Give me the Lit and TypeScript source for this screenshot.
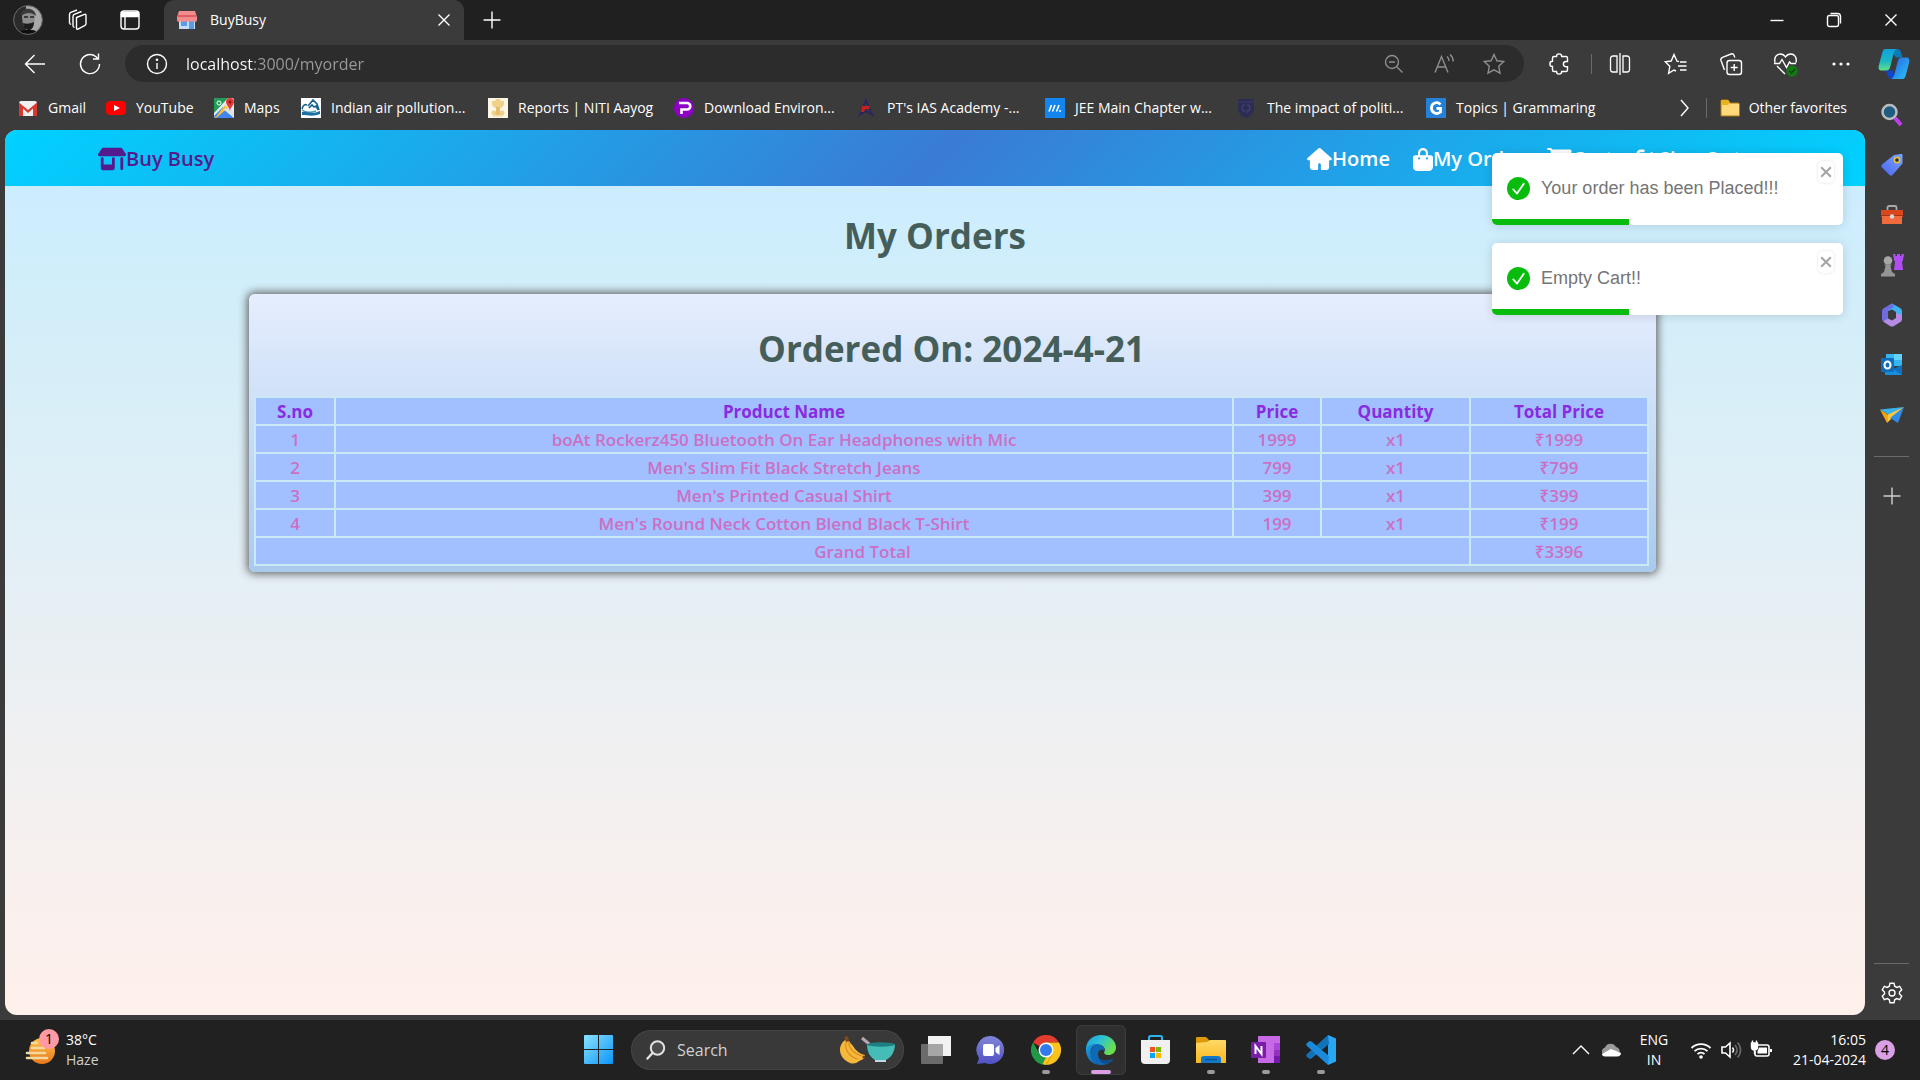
import { LitElement, html, css, svg, type TemplateResult } from "lit";
import { customElement, state } from "lit/decorators.js";
import { styleMap } from "lit/directives/style-map.js";

const icon = (size: number, box: string, body: unknown, cls = "line") =>
  html`<svg class=${cls} width=${size} height=${size} viewBox=${box} aria-hidden="true">${body}</svg>`;

/* ---------- window and toolbar glyphs ---------- */
const workspaces = icon(24, "0 0 24 24", svg`
  <path d="M10.500 9.500l8-3.200c.9-.3 1.500.2 1.500 1.100v8.200c0 .8-.3 1.400-1 1.700l-7 3.800c-.9.4-1.500 0-1.500-1z"/>
  <path d="M7 18.500V8.500c0-1 .4-1.700 1.300-2.100L15.500 3.500"/><path d="M3.500 15.500V6.500c0-1 .5-1.700 1.300-2.100L11 2"/>
  <path d="M3.500 15.500l1.500 1M7 18.500l1.500 1"/>`);
const tabActions = icon(22, "0 0 22 22", svg`
  <rect x="2" y="2" width="18" height="18" rx="3"/><path d="M2.500 3.500h17v4h-17z" fill="currentColor"/><path d="M6 8v11.500"/>`);
const cross = icon(16, "0 0 16 16", svg`<path d="M2.500 2.500l11 11M13.500 2.500l-11 11"/>`);
const plus = icon(20, "0 0 20 20", svg`<path d="M10 1.500v17M1.500 10h17"/>`);
const minimize = icon(16, "0 0 16 16", svg`<path d="M1.500 8.500h13"/>`);
const restore = icon(16, "0 0 16 16", svg`<rect x="1.500" y="3.500" width="11" height="11" rx="2"/><path d="M4.500 1.500h7a3 3 0 0 1 3 3v7"/>`);
const back = icon(24, "0 0 24 24", svg`<path d="M22 12H2.500M11.500 3L2.500 12l9 9"/>`);
const refresh = icon(24, "0 0 24 24", svg`<path d="M21.500 12A9.500 9.500 0 1 1 18 4.700l2.500 2.300M20.500 1.500V7H15"/>`);
const info = icon(22, "0 0 22 22", svg`<circle cx="11" cy="11" r="9.500"/><path d="M11 10v6"/><circle cx="11" cy="6.800" r=".6" fill="currentColor"/>`);
const zoomOut = icon(22, "0 0 22 22", svg`<circle cx="9" cy="9" r="6.500"/><path d="M6 9h6M14 14l5.500 5.500"/>`);
const readAloud = icon(24, "0 0 24 24", svg`<path d="M3 20.500L9.500 4.500 16 20.500M5.200 15h8.600M15 4.500c1.300 1 2 2.500 2 4.500M18 2.500c2 1.700 3.200 4 3.200 7"/>`);
const star = icon(24, "0 0 24 24", svg`<path d="M12 2.500l2.900 6.300 6.800.8-5 4.700 1.300 6.900-6-3.400-6 3.400 1.300-6.900-5-4.700 6.800-.8z"/>`);
const puzzle = icon(24, "0 0 24 24", svg`<path d="M8.500 4.500a2.600 2.600 0 0 1 5.200 0H18a1.500 1.500 0 0 1 1.500 1.500v3.500H18a2.600 2.600 0 0 0 0 5.200h1.500V18a1.500 1.500 0 0 1-1.500 1.500h-4.300a2.600 2.600 0 0 1-5.200 0H6A1.500 1.500 0 0 1 4.500 18v-3.500a2.600 2.600 0 0 1 0-5.200V6A1.500 1.500 0 0 1 6 4.500z"/>`);
const split = icon(24, "0 0 24 24", svg`<path d="M12 1v22M9 4H5a2.500 2.500 0 0 0-2.500 2.500v11A2.500 2.500 0 0 0 5 20h4zM15 4h4a2.500 2.500 0 0 1 2.500 2.500v11A2.500 2.500 0 0 1 19 20h-4z" stroke-width="1.300"/>`);
const favList = icon(24, "0 0 24 24", svg`<path d="M15 9.500l-2-.3L10 2.500 7.200 9l-6 .8 4.600 4.500-1.200 7L10 18l2 1M16 10h6.500M14 14h8.500M16 18h6.500"/>`);
const collections = icon(24, "0 0 24 24", svg`<rect x="8" y="8.500" width="14.500" height="14" rx="2.500"/><path d="M15.200 12v7M11.700 15.500h7M5.500 18L2 8.500C1.500 7 2 6 3.500 5.300L12 2c1.500-.5 2.500 0 3 1.200l.8 2.300"/>`);
const essentials = icon(26, "0 0 26 26", svg`
  <path d="M2 11.500C.8 6 4 3 7.200 3c2.300 0 4.200 1.200 5.300 3 1.100-1.800 3-3 5.300-3C21 3 24.200 6 23 11.500M4 15l8 8M1 12.500h5.500L9 8.500l4.500 8 3-5.500 1.500 1.500h5"/>
  <circle cx="19" cy="20" r="5.500" fill="#107c10" stroke="none"/><path d="M16.500 20l2 2 3.500-4" stroke="#0b3d0b"/>`);
const dots = icon(22, "0 0 22 22", svg`<circle cx="4" cy="11" r="1.600"/><circle cx="11" cy="11" r="1.600"/><circle cx="18" cy="11" r="1.600"/>`, "solid");
const chevron = icon(20, "0 0 20 20", svg`<path d="M6 2l7 8-7 8"/>`);
const gear = icon(24, "0 0 24 24", svg`<path d="M10 2.200h4l.7 3 2 1.200 3-1 2 3.500-2.200 2.100v2l2.200 2.100-2 3.500-3-1-2 1.200-.7 3h-4l-.7-3-2-1.200-3 1-2-3.500 2.200-2.100v-2L2.300 8.900l2-3.500 3 1 2-1.200z"/><circle cx="12" cy="12" r="3"/>`);

const copilot = icon(32, "0 0 34 34", svg`
  <defs>
    <linearGradient id="cpA" x1="0" y1="0" x2="0" y2="1"><stop offset="0" stop-color="#12a0dc"/><stop offset=".55" stop-color="#1ab6c4"/><stop offset="1" stop-color="#5fe08a"/></linearGradient>
    <linearGradient id="cpB" x1="0" y1="0" x2="1" y2="1"><stop offset="0" stop-color="#2a63e0"/><stop offset="1" stop-color="#28c3f7"/></linearGradient>
  </defs>
  <path d="M12 1h8c3 0 4 2 5 5l1 4h-7z" fill="#0a7bb5"/>
  <path d="M8 24h8l4 9h-5c-3 0-4-2-5-5z" fill="#1046c8"/>
  <path d="M8 1h12c-2 1-3 3-3.500 5L13 20c-.7 3-2 4-4.500 4H4c-3 0-4-2-3-6L4.500 5C5.200 2.500 6 1 8 1z" fill="url(#cpA)"/>
  <path d="M26 33H14c2-1 3-3 3.500-5L21 14c.7-3 2-4 4.500-4H30c3 0 4 2 3 6l-3.500 13c-.7 2.500-1.500 4-3.500 4z" fill="url(#cpB)"/>`, "art");

/* ---------- bookmark favicons ---------- */
const favStore = icon(22, "0 0 22 22", svg`
  <path d="M3 9h16v11H3z" fill="#c4dcfa"/><rect x="5" y="12" width="6" height="5" fill="#5a9be8"/><rect x="13" y="12" width="5" height="8" fill="#5a9be8"/>
  <path d="M3 2h16l2 6v3a2 2 0 0 1-4 0 2 2 0 0 1-4 0 2 2 0 0 1-4 0 2 2 0 0 1-4 0 2 2 0 0 1-4 0V8z" fill="#f28b8b"/><path d="M2 6h18v2H2z" fill="#e05c62"/>`, "art");
const gmail = icon(20, "0 0 20 20", svg`<rect x="1" y="3" width="18" height="15" rx="2" fill="#f1f1f1"/><path d="M1 18V4.500L10 12l9-7.500V18h-4V10.500L10 15l-5-4.500V18z" fill="#d93a30"/>`, "art");
const youtube = icon(20, "0 0 20 20", svg`<rect y="3" width="20" height="14" rx="4" fill="#f00"/><path d="M8 7l6 3-6 3z" fill="#fff"/>`, "art");
const maps = icon(20, "0 0 20 20", svg`<rect width="20" height="20" rx="2" fill="#e8eaed"/><path d="M0 2a2 2 0 0 1 2-2h12L0 15z" fill="#1e9e57"/><path d="M0 18L9 9l11 11H2z" fill="#4285f4"/><path d="M11 7l3 3-12 10H1z" fill="#fbc02d"/><path d="M9 11l11 9V14l-5-4z" fill="#dfe1e5"/><path d="M16 0a4 4 0 0 1 4 4c0 3-3.500 5-4 9-.5-4-4-6-4-9a4 4 0 0 1 4-4z" fill="#e53935"/><circle cx="16" cy="4" r="1.500" fill="#8e1b17"/><circle cx="5" cy="5" r="2" fill="none" stroke="#fff"/>`, "art");
const airPollution = icon(20, "0 0 20 20", svg`<rect width="20" height="20" fill="#fff"/><path d="M1 11c1-4 3-5 5-4M7 8l5-6 4 4 2 6M8 10l3-3 2 2 2-1 2 4" fill="none" stroke="#15628f" stroke-width="1.600"/><path d="M1 12c4 3 8 3 14 1" fill="none" stroke="#4b9cc4" stroke-width="1.500"/><path d="M1 14c5-1 9 3 18-1v3c-7 3-12 1-18 1z" fill="#1c6f9e"/>`, "art");
const niti = icon(20, "0 0 20 20", svg`<rect width="20" height="20" fill="#fdf6e6"/><path d="M4 3h3l1-2h4l1 2h3v4l-3 3H7L4 7z" fill="#efd08c"/><path d="M8 9h4v4H8z" fill="#e6bd6a"/><circle cx="6" cy="15" r="2.500" fill="#efd08c"/><circle cx="10" cy="15" r="2.500" fill="#e6bd6a"/><circle cx="14" cy="15" r="2.500" fill="#efd08c"/><path d="M5 18h10" stroke="#efd08c"/>`, "art");
const purpleP = icon(20, "0 0 20 20", svg`<circle cx="10" cy="10" r="10" fill="#8f00c7"/><path d="M5 5h8a3 3 0 0 1 0 6.500H7.500V16" fill="none" stroke="#fff" stroke-width="2.600"/>`, "art");
const ias = icon(20, "0 0 20 20", svg`<path d="M9 0l8 19-8-5-8 5zM9 5l-4 9 4-2 4 2z" fill="#2b2560" fill-rule="evenodd"/><path d="M5 8h8l-1 3H8l-1 3H4z" fill="#c8201d"/>`, "art");
const marks = icon(20, "0 0 20 20", svg`<rect width="20" height="20" fill="#1385f0"/><path d="M4 13.500l2.500-6.500M7.500 13.500L10 7M11.500 13.500L14 7" stroke="#fff" stroke-width="1.600"/><circle cx="15" cy="13" r="1" fill="#fff"/>`, "art");
const shield = icon(20, "0 0 20 20", svg`<path d="M1 1h16v9c0 5-3 8-8 10-5-2-8-5-8-10z" fill="#2c2c55"/><path d="M1 4h16" stroke="#3a3a62"/><path d="M8 7a3 3 0 1 0 0 6M10 7a3 3 0 1 1 0 6v2" fill="none" stroke="#40406c" stroke-width="1.300"/>`, "art");
const letterG = icon(20, "0 0 20 20", svg`<rect width="20" height="20" fill="#2481d7"/><path d="M14.500 6.500C11 3 5.500 5 5.500 10s5.500 7 9 4v-3.500H10.500" fill="none" stroke="#fff" stroke-width="2.800"/>`, "art");
const folder = icon(20, "0 0 20 20", svg`<path d="M1 3a1 1 0 0 1 1-1h6l2 3h8a1.500 1.500 0 0 1 1.500 1.500V18H1z" fill="#ffd97a" stroke="#a97a10"/><path d="M1 7V3a1 1 0 0 1 1-1h6l2 3-2 2z" fill="#e9b320"/>`, "art");

/* ---------- sidebar apps ---------- */
const sideSearch = icon(24, "0 0 24 24", svg`<path d="M15 15l6 7" stroke="#bf3ff0" stroke-width="4"/><circle cx="9.500" cy="9" r="7" fill="#1f5c80" stroke="#b9bcc0" stroke-width="2.500"/>`, "art");
const sideTag = icon(24, "0 0 24 24", svg`<defs><linearGradient id="tg" x1="1" y1="0" x2="0" y2="1"><stop offset="0" stop-color="#7aa7ff"/><stop offset="1" stop-color="#4a63f0"/></linearGradient></defs><path d="M14 2l7-1c1 0 1.500.5 1.500 1.500v8L12.500 22c-1 1-2 1-3 0L2 14.500c-1-1-1-2 0-3z" fill="url(#tg)"/><circle cx="17" cy="7" r="2.600" fill="#1d2a70" stroke="#f6c51a" stroke-width="1.500"/>`, "art");
const sideTools = icon(24, "0 0 24 24", svg`<path d="M7.500 7V4.500A1.500 1.500 0 0 1 9 3h6a1.500 1.500 0 0 1 1.500 1.500V7" fill="none" stroke="#a9a9a9" stroke-width="1.800"/><path d="M1 7h22v7H1z" fill="#d8481c"/><path d="M2 13h20v8H2z" fill="#f06a3c"/><path d="M1 12.500h22" stroke="#a8330f"/><circle cx="12" cy="13.500" r="2.200" fill="#d9d9d9"/>`, "art");
const sideGames = icon(24, "0 0 24 24", svg`<path d="M13 1h2.500v2h1.500V1h3v2h1.500V1H24l-1 6-1 2 1 8h-9l1-8-1-2z" fill="#b14df5"/><circle cx="8" cy="7.500" r="4.300" fill="#a7a7a7"/><path d="M4 11.500h8l-1.500 1.500 1.500 6 3 2v2.500H1V21l3-2 1.500-6z" fill="#959595"/>`, "art");
const side365 = icon(24, "0 0 24 24", svg`<path d="M12 .5l8 4.500c1.500 1 2 2 2 3.500v7L16 12V9l-4-2.500L8 8V3z" fill="#3fb1f2"/><path d="M12 .5L4 5C2.500 6 2 7 2 8.500V16c0 1 .5 2 1.500 2.500L8 16V9c0-2 1-2.500 3-3.500l3-1.500z" fill="#6f6be0"/><path d="M22 12v4c0 1.500-.7 2.500-2 3.300l-6 3.700c-1.300.7-2.700.7-4 0L3 18.500l5-3 4 2 4-2.500V10z" fill="#b58be6"/>`, "art");
const sideOutlook = icon(24, "0 0 24 24", svg`<rect x="6" y="1" width="16" height="12" fill="#36b5f0"/><path d="M14 1h8v6h-8z" fill="#60d4ff"/><path d="M5 12l9 5 8-5v10H5z" fill="#1490df"/><path d="M22 12v10l-9-6z" fill="#0f6fc0"/><rect x="1" y="5" width="13" height="14" rx="1" fill="#0f6cbd"/><ellipse cx="7.500" cy="12" rx="3" ry="3.600" fill="none" stroke="#fff" stroke-width="2"/>`, "art");
const sideDrop = icon(24, "0 0 24 24", svg`<path d="M0 6.500L24 4 9 12z" fill="#35b3f2"/><path d="M0 6.500L7 20l1.500-8z" fill="#f2a50c"/><path d="M24 4L8 11.500 7 20l4-4z" fill="#ffc83a"/><path d="M24 4l-6 16-8-5z" fill="#2f8be6"/>`, "art");

/* ---------- shop glyphs ---------- */
const shop = html`<svg class="solid" width="28" height="24" viewBox="0 0 640 512" aria-hidden="true"><path d="M36.800 192h566.400a36.800 36.800 0 0 0 30.600-57.200L558.200 21.400C549.300 8 534.400 0 518.300 0H121.700c-16 0-31 8-39.900 21.400L6.200 134.700A36.800 36.800 0 0 0 36.800 192zM64 224v240c0 26.500 21.500 48 48 48h224c26.500 0 48-21.500 48-48V224h-64v160H128V224zm448 0v256c0 17.700 14.300 32 32 32s32-14.300 32-32V224z"/></svg>`;
const home = html`<svg class="solid" width="25" height="22" viewBox="0 0 576 512" aria-hidden="true"><path d="M575.800 255.500c0 18-15 32.100-32 32.100h-32l.7 160.200c.2 35.500-28.500 64.300-64 64.300H352c-17.700 0-32-14.300-32-32V384c0-17.700-14.300-32-32-32s-32 14.300-32 32v96c0 17.700-14.300 32-32 32h-96c-35.300 0-64-28.700-64-64V287.600H32c-18 0-32-14-32-32.100 0-9 3-17 10-24L266.400 8c7-7 15-8 22-8s15 2 21 7l255.400 224.500c8 7 12 15 11 24z"/></svg>`;
const bag = html`<svg class="solid" width="20" height="23" viewBox="0 0 448 512" aria-hidden="true"><path d="M160 112c0-35.300 28.700-64 64-64s64 28.700 64 64v48H160zm-48 48H48c-26.500 0-48 21.500-48 48v208c0 53 43 96 96 96h256c53 0 96-43 96-96V208c0-26.500-21.500-48-48-48h-64v-48a112 112 0 0 0-224 0zm24 48a24 24 0 1 1 0 48 24 24 0 1 1 0-48zm152 24a24 24 0 1 1 48 0 24 24 0 1 1-48 0z"/></svg>`;
const cart = html`<svg class="solid" width="25" height="22" viewBox="0 0 576 512" aria-hidden="true"><path d="M0 24C0 10.700 10.700 0 24 0h45.500c22 0 41.500 12.800 50.600 32h411c26.300 0 45.500 25 38.600 50.400l-41 152.300c-8.500 31.400-37 53.300-69.500 53.300H170.700l5.400 28.500c2.200 11.300 12.100 19.500 23.600 19.500H488a24 24 0 1 1 0 48H199.700c-34.600 0-64.300-24.600-70.700-58.500L77.400 54.500c-.7-3.800-4-6.500-7.900-6.500H24C10.700 48 0 37.300 0 24zm128 440a48 48 0 1 1 96 0 48 48 0 1 1-96 0zm336-48a48 48 0 1 1 0 96 48 48 0 1 1 0-96z"/></svg>`;
const exit = html`<svg class="solid" width="23" height="22" viewBox="0 0 512 512" aria-hidden="true"><path d="M502.600 278.600c12.500-12.500 12.500-32.800 0-45.300l-128-128a32 32 0 0 0-45.300 45.300L402.700 224H192a32 32 0 1 0 0 64h210.700l-73.400 73.400a32 32 0 0 0 45.300 45.300zM160 96a32 32 0 1 0 0-64H96C43 32 0 75 0 128v256c0 53 43 96 96 96h64a32 32 0 1 0 0-64H96c-17.700 0-32-14.300-32-32V128c0-17.700 14.300-32 32-32z"/></svg>`;
const check = icon(23, "0 0 24 24", svg`<circle cx="12" cy="12" r="12" fill="#07bc0c"/><path d="M6.500 13l4 4.300L17.500 7" fill="none" stroke="#fff" stroke-width="1.900" stroke-linecap="round" stroke-linejoin="round"/>`, "art");

/* ---------- taskbar ---------- */
const weather = icon(34, "0 0 34 34", svg`<defs><linearGradient id="sun" x1="0" y1="0" x2="0" y2="1"><stop offset="0" stop-color="#ffc24a"/><stop offset="1" stop-color="#e8771a"/></linearGradient></defs><circle cx="19" cy="18" r="13" fill="url(#sun)"/><path d="M9 10h5M9 15h12M4 20h18M4 25h20" stroke="#f3d9a0" stroke-width="2.600" stroke-linecap="round"/>`, "art");
const start = icon(30, "0 0 30 30", svg`<defs><linearGradient id="win" x1="0" y1="0" x2="1" y2="1"><stop offset="0" stop-color="#8ae2ff"/><stop offset="1" stop-color="#0a95f8"/></linearGradient></defs><path d="M1 0h13v14H0V1a1 1 0 0 1 1-1zM15 0h13a1 1 0 0 1 1 1v13H15zM0 15h14v14H1a1 1 0 0 1-1-1zM15 15h14v13a1 1 0 0 1-1 1H15z" fill="url(#win)"/>`, "art");
const lens = icon(20, "0 0 20 20", svg`<circle cx="11.500" cy="8" r="6.700" fill="#4c4c4c" stroke="#e2e2e2" stroke-width="2"/><path d="M6.500 13L1.500 18.500" stroke="#e2e2e2" stroke-width="2.400" stroke-linecap="round"/>`, "art");
const fruit = html`<svg class="art" width="58" height="28" viewBox="0 0 58 28" aria-hidden="true">
  <path d="M9 3c-9 4-10 17 1 23 5 3 9 1 11-1 4-1 6-3 6-6-5-1-9-4-12-9z" fill="#f5b83a"/><path d="M9 5c-4 7 2 16 11 18M11 5c-1 7 5 13 13 15" fill="none" stroke="#d98e1f" stroke-width="1.200"/><path d="M6 1l4-1 1 5-3 1z" fill="#7b4a1b"/><circle cx="26" cy="21" r="1.600" fill="#6e4317"/>
  <path d="M24 2l12 10" stroke="#b7a5b5" stroke-width="3"/><path d="M29 8h28c0 9-5 14-9 16v2H37v-2c-5-3-8-8-8-16z" fill="#45bdb6"/><ellipse cx="43" cy="8.500" rx="14" ry="2.200" fill="#1f7f84"/><path d="M37 25h11" stroke="#c1d6e6" stroke-width="2"/></svg>`;
const taskView = icon(30, "0 0 30 30", svg`<rect x="7" y="1" width="23" height="20" fill="#f2f2f2"/><rect x="0" y="9" width="22" height="20" rx="1" fill="#6b6b6b"/><path d="M7 9h15v12H7z" fill="#a6a6a6"/>`, "art");
const chat = icon(30, "0 0 30 30", svg`<defs><linearGradient id="ch" x1="0" y1="0" x2="0" y2="1"><stop offset="0" stop-color="#7f86d6"/><stop offset="1" stop-color="#5152c4"/></linearGradient></defs><path d="M15 1a14 14 0 1 1-6 27L1 29l2-6A14 14 0 0 1 15 1z" fill="url(#ch)"/><rect x="7" y="9" width="11" height="12" rx="2" fill="#fff"/><path d="M19.500 13l4-3v10l-4-3z" fill="#fff"/>`, "art");
const chrome = icon(30, "0 0 30 30", svg`<path d="M15 15L2 7.500A15 15 0 0 1 28 7.500H15z" fill="#e33b2e"/><path d="M15 15V7.500h13A15 15 0 0 1 15 30l6.500-11.200z" fill="#fcc31e"/><path d="M2 7.500L8.500 18.700l6.500 3.800L15 30A15 15 0 0 1 2 7.500z" fill="#219a48"/><path d="M15 30l6.500-11.200-6.500 3.700-3.500 6.500z" fill="#fcc31e"/><circle cx="15" cy="15" r="7.500" fill="#fff"/><circle cx="15" cy="15" r="6" fill="#3079ee"/>`, "art");
const edge = icon(30, "0 0 30 30", svg`<defs><linearGradient id="ed" x1="0" y1="0" x2="1" y2=".5"><stop offset="0" stop-color="#1b9de2"/><stop offset=".5" stop-color="#2fc3d2"/><stop offset="1" stop-color="#6be04a"/></linearGradient><linearGradient id="ee" x1="0" y1="0" x2="1" y2="1"><stop offset="0" stop-color="#1a9fe8"/><stop offset="1" stop-color="#0c59a4"/></linearGradient></defs>
  <path d="M0 13C1 5 7 0 15 0c9 0 15 6 15 12.500 0 5-4 7.500-7.500 7.500-4 0-5-2-4-3.500 1.500-3-1-6.500-6-6.500C6 10 1 13 0 17z" fill="url(#ed)"/>
  <path d="M0 15C1 11 5 8.500 10 9c-4 2-6 6-5 11 1 4.500 5 8 9 9.900C6 30 0 23 0 15z" fill="url(#ee)"/>
  <path d="M10 9c4-.5 8.500 2 8.500 6-3-1-7 0-6.500 5 1 6 9 7 15.500 3.500C25 28 20 30.500 14 29.900 8 28 4 23 5 17c.5-4 2-6.500 5-8z" fill="#1169b5"/>
  <path d="M27.500 23.500C22 27 13 26 12 20c0 6 4 9 9 8.700 3-1 5-3 6.500-5.200z" fill="#0d4d91"/>`, "art");
const store = icon(30, "0 0 30 30", svg`<path d="M8 7V2.500A1.500 1.500 0 0 1 9.500 1h10A1.500 1.500 0 0 1 21 2.500V7" fill="none" stroke="#2cb4f2" stroke-width="2"/><path d="M0 5h29v20a4 4 0 0 1-4 4H4a4 4 0 0 1-4-4z" fill="#f0f0f0"/><path d="M9 12h5v5H9z" fill="#f25022"/><path d="M15 12h5v5h-5z" fill="#7fba00"/><path d="M9 18h5v5H9z" fill="#00a4ef"/><path d="M15 18h5v5h-5z" fill="#ffb900"/>`, "art");
const explorer = icon(30, "0 0 30 30", svg`<defs><linearGradient id="ex" x1="0" y1="0" x2="0" y2="1"><stop offset="0" stop-color="#ffd968"/><stop offset="1" stop-color="#f9b81c"/></linearGradient></defs><path d="M0 3a1 1 0 0 1 1-1h9l3 3v4H0z" fill="#dc9a08"/><path d="M0 8l11-1 3-2h15a1 1 0 0 1 1 1v22H0z" fill="url(#ex)"/><path d="M5 28v-4a3 3 0 0 1 3-3h14a3 3 0 0 1 3 3v4z" fill="#1278c8"/><path d="M9 24.500h12" stroke="#0b5494" stroke-width="1.500"/>`, "art");
const onenote = icon(30, "0 0 30 30", svg`<path d="M7 1h22v27H7z" fill="#c86ae8"/><path d="M23 8h6v7h-6z" fill="#ae45da"/><path d="M23 15h6v6h-6z" fill="#9332bf"/><path d="M23 21h6v7h-6z" fill="#7719aa"/><rect x="0" y="7" width="15" height="16" rx="1" fill="#7a1ea8"/><path d="M4.500 19v-8l6 8v-8" fill="none" stroke="#fff" stroke-width="2"/>`, "art");
const vscode = icon(30, "0 0 30 30", svg`<path d="M22 0l8 3.500v23L22 30z" fill="#2aa7f3"/><path d="M22 0L1 19c-1 1-1 2 0 3l2 1.500c1 .5 1.500.5 2.500 0L23 9z" fill="#1272b8"/><path d="M22 30L1 11c-1-1-1-2 0-3l2-1.500c1-.5 1.500-.5 2.500 0L23 21z" fill="#1a8bdb"/>`, "art");
const cloud = html`<svg class="art" width="22" height="16" viewBox="0 0 22 16" aria-hidden="true"><path d="M5 14A4.500 4.500 0 0 1 5 5.500 6 6 0 0 1 16 5a4.800 4.800 0 0 1 1 9z" fill="#9b9b9b"/><path d="M2 12l9-5 10 4c0 2-1.500 3.500-4 3.500H5c-2 0-3-1-3-2.500z" fill="#fff"/></svg>`;
const up = icon(20, "0 0 20 20", svg`<path d="M2 14l8-8 8 8"/>`);
const wifi = icon(22, "0 0 22 22", svg`<g stroke-width="1.800"><path d="M1.500 9a13.500 13.500 0 0 1 19 0M4.500 12.200a9.300 9.300 0 0 1 13 0M7.500 15.200a5 5 0 0 1 7 0"/></g><circle cx="11" cy="18" r="1.800" fill="currentColor" stroke="none"/>`);
const speaker = icon(22, "0 0 22 22", svg`<path d="M2 8h3.500L10 4v14l-4.500-4H2z" stroke-width="1.600"/><path d="M12.500 8.500c1.300 1.500 1.300 3.500 0 5"/><path d="M15 6c2.500 3 2.500 7 0 10M17.500 3.500c4 4 4 11 0 15" stroke="#6a6a6a" stroke-width="1.600"/>`);
const battery = icon(22, "0 0 22 22", svg`<path d="M8 6h9a2 2 0 0 1 2 2v7a2 2 0 0 1-2 2H7a2 2 0 0 1-2-2v-3" stroke-width="1.600"/><path d="M9 8.500h8v6H7.500v-2z" fill="currentColor" stroke="none"/><path d="M1.500 4h6v4a3 3 0 0 1-6 0zM2.500 4V1.500M6.500 4V1.500M4.500 11v4" fill="currentColor"/><path d="M21 10v3" stroke-width="2"/>`);

interface Entry { label: string; art: TemplateResult; }
interface Item { name: string; price: number; qty: number; }

const bookmarks: Entry[] = [
  { label: "Gmail", art: gmail },
  { label: "YouTube", art: youtube },
  { label: "Maps", art: maps },
  { label: "Indian air pollution...", art: airPollution },
  { label: "Reports | NITI Aayog", art: niti },
  { label: "Download Environ...", art: purpleP },
  { label: "PT's IAS Academy -...", art: ias },
  { label: "JEE Main Chapter w...", art: marks },
  { label: "The impact of politi...", art: shield },
  { label: "Topics | Grammaring", art: letterG },
];
const sideApps: Entry[] = [
  { label: "Search", art: sideSearch },
  { label: "Shopping", art: sideTag },
  { label: "Tools", art: sideTools },
  { label: "Games", art: sideGames },
  { label: "Microsoft 365", art: side365 },
  { label: "Outlook", art: sideOutlook },
  { label: "Drop", art: sideDrop },
];
const pinned: (Entry & { mark: string })[] = [
  { label: "Task view", art: taskView, mark: "" },
  { label: "Chat", art: chat, mark: "" },
  { label: "Chrome", art: chrome, mark: "open" },
  { label: "Edge", art: edge, mark: "active" },
  { label: "Store", art: store, mark: "" },
  { label: "File Explorer", art: explorer, mark: "open" },
  { label: "OneNote", art: onenote, mark: "open" },
  { label: "Code", art: vscode, mark: "open" },
];
const items: Item[] = [
  { name: "boAt Rockerz450 Bluetooth On Ear Headphones with Mic", price: 1999, qty: 1 },
  { name: "Men's Slim Fit Black Stretch Jeans", price: 799, qty: 1 },
  { name: "Men's Printed Casual Shirt", price: 399, qty: 1 },
  { name: "Men's Round Neck Cotton Blend Black T-Shirt", price: 199, qty: 1 },
];

@customElement("app-root")
export class AppRoot extends LitElement {
  @state() private toasts = [
    { text: "Your order has been Placed!!!", left: 39 },
    { text: "Empty Cart!!", left: 39 },
  ];

  static styles = css`
    :host {
      display: flex; flex-direction: column; min-height: 100vh;
      background: #3b3b3b; color: #fff;
      font: 14px/20px "Open Sans", "Noto Sans", sans-serif;
    }
    * { box-sizing: border-box; }
    svg { display: block; flex: none; }
    .line { fill: none; stroke: currentColor; stroke-width: 1.4; }
    .solid { fill: currentColor; }
    button { display: flex; align-items: center; justify-content: center; padding: 0; border: 0; background: none; color: inherit; font: inherit; flex: none; }
    a { color: inherit; text-decoration: none; }
    .tool { width: 55px; height: 40px; }

    .titlebar { display: flex; height: 40px; background: #202020; }
    .profile { width: 52px; height: 40px; padding-left: 4px; }
    .start-tools { display: flex; width: 164px; }
    .start-tools .tool { width: 52px; }
    .tab { display: flex; align-items: center; width: 300px; height: 40px; padding: 0 12px; gap: 12px; background: #3b3b3b; border-radius: 10px 10px 0 0; flex: none; }
    .tab-name { flex: 1; }
    .tab button { width: 16px; }
    .window { display: flex; margin-left: auto; padding-right: 1px; }
    .window .tool { width: 57px; }

    .toolbar { display: flex; align-items: center; height: 46px; padding: 1px 0 0 7px; }
    .address { display: flex; align-items: center; flex: 1; height: 37px; margin-left: 8px; padding: 0 5px 0 21px; border-radius: 19px; background: #2c2c2c; }
    .address .tool { width: 50px; color: #8e8e8e; }
    .address .info { width: 22px; }
    .url { flex: 1; min-width: 0; margin-left: 18px; padding: 0; border: 0; outline: 0; font: 16px/24px "Open Sans", "Noto Sans", sans-serif;
      color: transparent; background: linear-gradient(90deg, #fff 67px, #9a9a9a 67px); background-clip: text; -webkit-background-clip: text; }
    .extras { display: flex; align-items: center; padding-left: 8px; }
    .extras .narrow { width: 56px; }
    .extras .copilot { width: 52px; }
    .extras .rule { margin-left: 4px; }
    .rule { width: 1px; height: 20px; background: #6a6a6a; }

    .bookmarks { display: flex; align-items: center; height: 44px; padding: 0 73px 0 18px; }
    .bookmarks ul { display: grid; grid-template-columns: 88px 108px 87px 187px 186px 183px 188px 192px 189px auto; margin: 0; padding: 0; list-style: none; }
    .bookmark { display: flex; align-items: center; gap: 10px; white-space: nowrap; }
    .more { width: 20px; margin-left: auto; margin-right: 11px; }
    .other { gap: 9px; margin-left: 13px; }

    .middle { display: flex; flex: 1; padding: 0 0 5px 5px; }
    .page { position: relative; flex: 1; min-width: 0; border-radius: 12px; overflow: hidden; color: #455e59;
      background: linear-gradient(#cbebff 0, #cdedff 8%, #d0eefa 16%, #e4eff5 50%, #f3f0f0 75%, #fff0eb 100%); }
    .nav { display: flex; align-items: center; height: 56px; padding: 2px 124px 0 93px; background: linear-gradient(135deg, #00d2ff, #3a7bd5, #00d2ff);
      color: #fff; font-size: 20px; line-height: 28px; font-weight: 600; }
    .nav a { display: flex; align-items: center; }
    .brand { color: #551a8b; }
    .links { display: flex; gap: 23px; margin-left: auto; }
    h1 { margin: 0; text-align: center; font-size: 35px; line-height: 48px; font-weight: 700; }
    .title { margin-top: 26px; }
    .card { width: calc(75% + 12px); margin: 34px 0 0 244px; padding: 31px 7px 6px 5px; border-radius: 6px; background: linear-gradient(#e6eefe, #a9caed); box-shadow: 0 0 8px 2px #666; }
    .orders { width: 100%; margin-top: 23px; border-collapse: collapse; table-layout: fixed; text-align: center; font-size: 17px; line-height: 24px; font-weight: 600; color: #cc6fc4; }
    .orders th, .orders td { padding: 2px 0 0; border: 2px solid #cbe8f5; background: #a2bfff; }
    .orders th { color: #8a2be2; font-weight: 700; }
    .c-no { width: 80px; } .c-price { width: 88px; } .c-qty { width: 149px; } .c-total { width: 178px; }

    .toasts { position: absolute; top: 23px; right: 22px; width: 351px; display: flex; flex-direction: column; gap: 18px; }
    .toast { position: relative; display: flex; align-items: center; height: 72px; padding: 0 15px 2px; gap: 11px; border-radius: 5px; overflow: hidden;
      background: #fff; color: #757575; font: 18px/24px "Liberation Sans", Arial, sans-serif; }
    .lift { border-radius: 5px; box-shadow: 0 1px 11px rgba(0, 0, 0, 0.14); }
    .toast button { position: absolute; top: 8px; right: 9px; width: 16px; height: 22px; border-radius: 5px; box-shadow: 0 0 3px #ddd; color: #a5a5a5; }
    .toast button svg { width: 14px; height: 14px; stroke-width: 2.4; }
    .progress { position: absolute; left: 0; bottom: 0; height: 6px; background: #07bc0c; }

    .side { display: flex; flex-direction: column; align-items: center; width: 55px; margin-top: -40px; padding-right: 2px; }
    .side .app { width: 40px; height: 50px; }
    .side .rule { width: 35px; height: 1px; }
    .side .first { margin-top: 16px; }
    .side .add { margin-top: 14px; color: #d0d0d0; }
    .side .last { margin-top: auto; }
    .side .app.settings { height: 51px; padding-top: 6px; }

    .taskbar { display: grid; grid-template-columns: 1fr auto 1fr; align-items: center; height: 60px; background: #212121; }
    .weather { display: flex; width: 140px; margin-left: 23px; justify-content: flex-start; text-align: left; line-height: 20px; gap: 9px; color: #d0d0d0; }
    .weather strong { display: block; font-weight: 400; color: #fff; }
    .weather-art { position: relative; }
    .badge { display: grid; place-items: center; width: 20px; height: 20px; border-radius: 50%; color: #000; background: #d9a0e6; }
    .alert { position: absolute; top: -4px; right: -2px; background: #ff99a4; }
    .dock { display: flex; align-items: center; gap: 5px; }
    .search { display: flex; align-items: center; width: 273px; height: 40px; margin: 0 2px; padding: 0 8px 0 15px; border-radius: 20px; background: #393939; box-shadow: inset 0 0 0 1px #454545; }
    .search input { flex: 1; min-width: 0; margin-left: 11px; padding: 0; border: 0; outline: 0; background: none; color: #fff; font: 16px/24px "Open Sans", "Noto Sans", sans-serif; }
    .search input::placeholder { color: #d0d0d0; opacity: 1; }
    .pin { position: relative; width: 50px; height: 50px; border-radius: 6px; }
    .pin.active { background: #2f2f2f; box-shadow: inset 0 0 0 1px #3c3c3c; }
    .pin.open::after, .pin.active::after { content: ""; position: absolute; bottom: 1px; left: 50%; width: 8px; height: 4px; margin-left: -4px; border-radius: 2px; background: #9a9a9a; }
    .pin.active::after { width: 20px; margin-left: -10px; background: #d9a0e6; }
    .tray { display: flex; align-items: center; justify-content: flex-end; padding-right: 25px; }
    .tray button { width: 30px; }
    .tray .lang { display: block; width: 56px; margin-right: 4px; line-height: 20px; }
    .tray .clock { display: block; width: 90px; text-align: right; line-height: 20px; margin-right: 9px; }
  `;

  private dismiss(index: number) {
    this.toasts = this.toasts.filter((_, i) => i !== index);
  }

  private tool(label: string, art: TemplateResult, cls = "") {
    return html`<button class="tool ${cls}" aria-label=${label}>${art}</button>`;
  }

  private bookmark(entry: Entry, cls = "") {
    return html`<a class="bookmark ${cls}" href="#">${entry.art}<span>${entry.label}</span></a>`;
  }

  private renderBrowser() {
    return html`
      <header>
        <div class="titlebar">
          <div class="start-tools">
            <button class="profile" aria-label="Profile">
              ${icon(30, "0 0 30 30", svg`<defs><clipPath id="av"><circle cx="15" cy="15" r="14"/></clipPath></defs><g clip-path="url(#av)"><path d="M0 0h30v30H0z" fill="#a9a9a9"/><path d="M0 0h13v30H0z" fill="#2b2b2b"/><path d="M9 12c0-8 12-9 13 0l-1 7c-2 5-8 6-11 1z" fill="#8d8d8d"/><path d="M8 11C7 2 22 1 23 11c-4-4-10-4-15 0z" fill="#3a3a3a"/><path d="M10 18c3 1 7 1 11-1 0 6-3 8-5 8s-6-2-6-7z" fill="#1c1c1c"/><path d="M11 12h4M17 12h4" stroke="#222" stroke-width="1.500"/><path d="M3 30c2-7 22-7 25 0z" fill="#0e0e0e"/></g><circle cx="15" cy="15" r="14.500" fill="none" stroke="#666"/>`, "art")}
            </button>
            ${this.tool("Workspaces", workspaces)}<button class="tool" aria-label="Tab actions">${tabActions}</button>
          </div>
          <div class="tab">${favStore}<span class="tab-name">BuyBusy</span><button aria-label="Close tab">${cross}</button></div>
          ${this.tool("New tab", plus)}
          <div class="window">${this.tool("Minimize", minimize)}${this.tool("Restore", restore)}${this.tool("Close", cross)}</div>
        </div>
        <div class="toolbar">
          ${this.tool("Back", back)}${this.tool("Refresh", refresh)}
          <div class="address">
            <button class="info" aria-label="Site information">${info}</button>
            <input class="url" aria-label="Address" .value=${"localhost:3000/myorder"} />
            ${this.tool("Zoom", zoomOut)}${this.tool("Read aloud", readAloud)}${this.tool("Add to favorites", star)}
          </div>
          <div class="extras">
            ${this.tool("Extensions", puzzle)}<span class="rule"></span>
            ${this.tool("Split screen", split, "narrow")}${this.tool("Favorites", favList)}${this.tool("Collections", collections)}
            ${this.tool("Browser essentials", essentials)}${this.tool("Settings and more", dots)}${this.tool("Copilot", copilot, "copilot")}
          </div>
        </div>
        <nav class="bookmarks" aria-label="Favorites bar">
          <ul>${bookmarks.map((b) => html`<li>${this.bookmark(b)}</li>`)}</ul>
          <button class="more" aria-label="More favorites">${chevron}</button>
          <span class="rule"></span>
          ${this.bookmark({ label: "Other favorites", art: folder }, "other")}
        </nav>
      </header>`;
  }

  private renderPage() {
    const total = items.reduce((sum, i) => sum + i.price * i.qty, 0);
    return html`
      <main class="page">
        <nav class="nav" aria-label="Shop">
          <a class="brand" href="#">${shop}<span>Buy Busy</span></a>
          <div class="links">
            <a href="#">${home}<span>Home</span></a>
            <a href="#">${bag}<span>My Order</span></a>
            <a href="#">${cart}<span>Cart</span></a>
            <a href="#">${exit}<span>Sign Out</span></a>
          </div>
        </nav>
        <h1 class="title">My Orders</h1>
        <section class="card">
          <h1>Ordered On: 2024-4-21</h1>
          <table class="orders">
            <colgroup><col class="c-no" /><col /><col class="c-price" /><col class="c-qty" /><col class="c-total" /></colgroup>
            <thead><tr><th>S.no</th><th>Product Name</th><th>Price</th><th>Quantity</th><th>Total Price</th></tr></thead>
            <tbody>
              ${items.map((item, i) => html`<tr><td>${i + 1}</td><td>${item.name}</td><td>${item.price}</td><td>x${item.qty}</td><td>₹${item.price * item.qty}</td></tr>`)}
              <tr><td colspan="4">Grand Total</td><td>₹${total}</td></tr>
            </tbody>
          </table>
        </section>
        <div class="toasts">
          ${this.toasts.map((t, i) => html`
            <div class="lift"><div class="toast" role="alert">
              ${check}<span>${t.text}</span>
              <button aria-label="Dismiss" @click=${() => this.dismiss(i)}>${cross}</button>
              <div class="progress" style=${styleMap({ width: `${t.left}%` })}></div>
            </div></div>`)}
        </div>
      </main>`;
  }

  private renderTaskbar() {
    return html`
      <footer class="taskbar">
        <button class="weather"><span class="weather-art">${weather}<span class="badge alert">1</span></span><span><strong>38°C</strong>Haze</span></button>
        <div class="dock">
          <button class="pin" aria-label="Start">${start}</button>
          <label class="search">${lens}<input type="text" placeholder="Search" aria-label="Search" />${fruit}</label>
          ${pinned.map((p) => html`<button class="pin ${p.mark}" aria-label=${p.label}>${p.art}</button>`)}
        </div>
        <div class="tray">
          <button aria-label="Hidden icons">${up}</button><button aria-label="OneDrive">${cloud}</button>
          <button class="lang">ENG<br />IN</button>
          <button aria-label="Network">${wifi}</button><button aria-label="Volume">${speaker}</button><button aria-label="Battery">${battery}</button>
          <button class="clock">16:05<br />21-04-2024</button>
          <span class="badge">4</span>
        </div>
      </footer>`;
  }

  render() {
    return html`
      ${this.renderBrowser()}
      <div class="middle">
        ${this.renderPage()}
        <aside class="side">
          ${sideApps.map((a) => html`<button class="app" aria-label=${a.label}>${a.art}</button>`)}
          <span class="rule first"></span>
          <button class="app add" aria-label="Customize">${plus}</button>
          <span class="rule last"></span>
          <button class="app settings" aria-label="Settings">${gear}</button>
        </aside>
      </div>
      ${this.renderTaskbar()}`;
  }
}
